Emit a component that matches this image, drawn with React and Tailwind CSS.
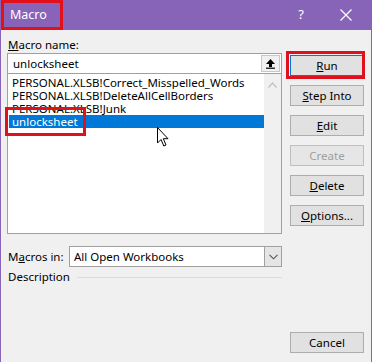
import { useState } from 'react'

const macros = [
  'PERSONAL.XLSB!Correct_Misspelled_Words',
  'PERSONAL.XLSB!DeleteAllCellBorders',
  'PERSONAL.XLSB!Junk',
  'unlocksheet',
]

function Btn({ children, disabled, primary }) {
  return (
    <button
      type="button"
      disabled={disabled}
      className={
        'h-[21px] w-full border bg-[#e1e1e1] text-[11.5px] leading-none ' +
        (primary ? 'border-[#0078d7] ' : 'border-[#adadad] ') +
        (disabled ? 'text-[#a0a0a0] border-[#bfbfbf] bg-[#e6e6e6]' : 'text-black')
      }
    >
      {children}
    </button>
  )
}

function Cursor() {
  return (
    <svg width="13" height="20" viewBox="0 0 13 20" className="absolute left-[156px] top-[127px]">
      <path d="M0.5 0.5 L0.5 16 L4 12.5 L6.8 19 L9 18 L6.3 11.7 L11 11.7 Z" fill="#fff" stroke="#000" strokeWidth="1" strokeLinejoin="round" />
    </svg>
  )
}

export default function App() {
  const [selected] = useState(3)
  return (
    <div className="relative h-[362px] w-[372px] overflow-hidden border-x border-[#8764b8] bg-[#f0f0f0] font-['Segoe_UI','Noto_Sans',sans-serif] text-[11.5px] text-black">
      {/* title bar */}
      <div className="flex h-[30px] items-center bg-[#8764b8] pl-[9px] text-white">
        <span className="text-[12.5px]">Macro</span>
        <span className="ml-auto mr-[36px] text-[13px]">?</span>
        <svg width="12" height="12" viewBox="0 0 12 12" className="mr-[19px]">
          <path d="M0.5 0.5 L11.5 11.5 M11.5 0.5 L0.5 11.5" stroke="#fff" strokeWidth="1.2" />
        </svg>
      </div>

      <div className="flex h-[331px] pl-[6px] pr-[7px]">
        {/* left column */}
        <div className="flex w-[275px] flex-col">
          <div className="mt-[7px] h-[16px] pl-[1px] leading-[16px]">
            <span className="underline">M</span>acro name:
          </div>
          <div className="flex h-[21px] items-center border border-[#a0a0a0] bg-white">
            <span className="flex-1 pl-[5px]">unlocksheet</span>
            <div className="mr-[1px] flex h-[17px] w-[19px] items-center justify-center border border-[#c8c8c8] bg-[#f0f0f0]">
              <svg width="11" height="11" viewBox="0 0 11 11">
                <path d="M5.5 1 L10 6 L7 6 L7 9 L4 9 L4 6 L1 6 Z" fill="#000" />
                <rect x="1" y="9.6" width="9" height="1.2" fill="#000" />
              </svg>
            </div>
          </div>
          <div className="flex h-[160px] border-x border-b border-[#a0a0a0] bg-white">
            <div className="flex-1 pt-[2px] pl-[1px]">
              {macros.map((m, i) => (
                <div
                  key={m}
                  className={
                    'h-[13px] overflow-hidden pl-[3px] leading-[13px] ' +
                    (i === selected ? 'bg-[#0078d7] text-white' : '')
                  }
                >
                  {m}
                </div>
              ))}
            </div>
            <div className="flex w-[17px] justify-center bg-[#f0f0f0] pt-[8px]">
              <svg width="9" height="6" viewBox="0 0 9 6">
                <path d="M0.5 5.5 L4.5 1 L8.5 5.5" fill="none" stroke="#c0c0c0" strokeWidth="1.2" />
              </svg>
            </div>
          </div>
          <div className="mt-[12px] flex h-[21px] items-center">
            <span className="w-[62px] pl-[1px]">
              M<span className="underline">a</span>cros in:
            </span>
            <div className="flex h-[21px] flex-1 items-center border border-[#a0a0a0] bg-white">
              <span className="flex-1 pl-[4px]">All Open Workbooks</span>
              <div className="flex h-[19px] w-[17px] items-center justify-center border-l border-[#a0a0a0] bg-[#e5e5e5]">
                <svg width="9" height="6" viewBox="0 0 9 6">
                  <path d="M0.5 0.8 L4.5 4.8 L8.5 0.8" fill="none" stroke="#555" strokeWidth="1.1" />
                </svg>
              </div>
            </div>
          </div>
          <div className="mt-[2px] flex h-[16px] items-center">
            <span className="pl-[1px] leading-[16px]">Description</span>
            <div className="ml-[7px] h-px flex-1 bg-[#dcdcdc]" />
          </div>
        </div>

        {/* right column */}
        <div className="ml-[8px] flex w-[74px] flex-col gap-[9px] pt-[25px]">
          <Btn primary>
            <span className="underline">R</span>un
          </Btn>
          <Btn>
            <span className="underline">S</span>tep Into
          </Btn>
          <Btn>
            <span className="underline">E</span>dit
          </Btn>
          <Btn disabled>Create</Btn>
          <Btn>
            <span className="underline">D</span>elete
          </Btn>
          <Btn>
            <span className="underline">O</span>ptions...
          </Btn>
          <div className="mt-auto mb-[8px]">
            <Btn>Cancel</Btn>
          </div>
        </div>
      </div>

      {/* annotation boxes */}
      <div className="absolute left-0 top-0 h-[30px] w-[62px] border-[3px] border-[#e0101c]" />
      <div className="absolute left-[285px] top-[51px] h-[28px] w-[79px] border-[3px] border-[#e0101c]" />
      <div className="absolute left-[4px] top-[107px] h-[29px] w-[81px] border-[3px] border-[#e0101c]" />
      <Cursor />
    </div>
  )
}
